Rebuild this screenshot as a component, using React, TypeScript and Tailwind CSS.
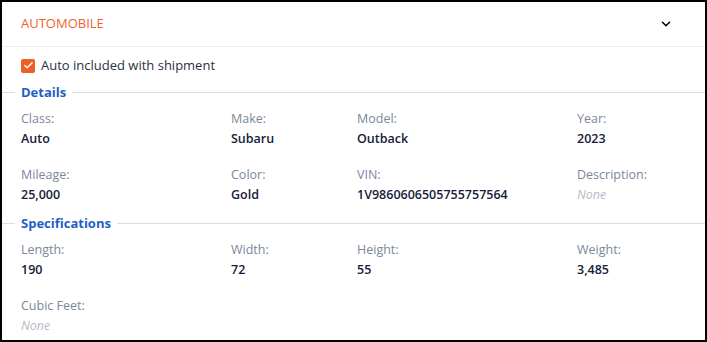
import { ChevronDown, Check } from 'lucide-react';

type Field = { label: string; value?: string };

const details: Field[][] = [
  [
    { label: 'Class:', value: 'Auto' },
    { label: 'Make:', value: 'Subaru' },
    { label: 'Model:', value: 'Outback' },
    { label: 'Year:', value: '2023' },
  ],
  [
    { label: 'Mileage:', value: '25,000' },
    { label: 'Color:', value: 'Gold' },
    { label: 'VIN:', value: '1V9860606505755757564' },
    { label: 'Description:' },
  ],
];

const specs: Field[][] = [
  [
    { label: 'Length:', value: '190' },
    { label: 'Width:', value: '72' },
    { label: 'Height:', value: '55' },
    { label: 'Weight:', value: '3,485' },
  ],
  [{ label: 'Cubic Feet:' }],
];

function Section({ title, rows }: { title: string; rows: Field[][] }) {
  return (
    <div>
      <div className="flex items-center h-[18px]">
        <div className="w-[13px] h-px bg-[#dddce8]" />
        <span className="px-[6px] text-[13px] font-bold text-[#1f5fc4] leading-none">{title}</span>
        <div className="flex-1 h-px bg-[#dddce8]" />
      </div>
      <div className="pl-[19px] pt-[7px] flex flex-col gap-[16px]">
        {rows.map((row, i) => (
          <div key={i} className="grid grid-cols-[210px_126px_220px_1fr]">
            {row.map((f) => (
              <div key={f.label} className="flex flex-col">
                <span className="text-[12.5px] leading-[20px] text-[#7b879b]">{f.label}</span>
                {f.value ? (
                  <span className="text-[12.5px] leading-[20px] font-semibold text-[#16203a]">{f.value}</span>
                ) : (
                  <span className="text-[12.5px] leading-[20px] italic text-[#b8bac6]">None</span>
                )}
              </div>
            ))}
          </div>
        ))}
      </div>
    </div>
  );
}

export default function App() {
  return (
    <div className="w-[707px] h-[342px] bg-white border-2 border-black font-['Open_Sans',sans-serif] overflow-hidden">
      <div className="flex items-center justify-between h-[45px] pl-[19px] pr-[32px] border-b border-[#efeff2]">
        <span className="text-[13px] text-[#f0622a]">AUTOMOBILE</span>
        <ChevronDown className="w-[14px] h-[14px] text-black" strokeWidth={2.6} />
      </div>
      <div className="flex items-center gap-[6px] pl-[19px] pt-[9px] pb-[8px]">
        <div className="w-[14px] h-[14px] rounded-[2px] bg-[#ee6126] flex items-center justify-center">
          <Check className="w-[11px] h-[11px] text-white" strokeWidth={3} />
        </div>
        <span className="text-[13px] text-[#2b3145]">Auto included with shipment</span>
      </div>
      <Section title="Details" rows={details} />
      <div className="h-[10px]" />
      <Section title="Specifications" rows={specs} />
    </div>
  );
}
